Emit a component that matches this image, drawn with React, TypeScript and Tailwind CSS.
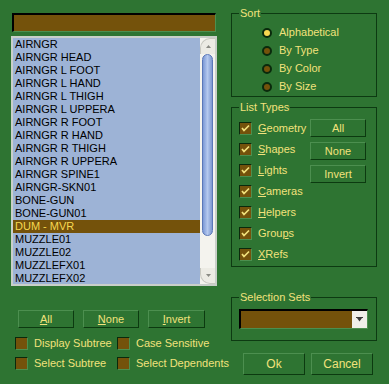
import React from 'react';

const items = [
  'AIRNGR',
  'AIRNGR HEAD',
  'AIRNGR L FOOT',
  'AIRNGR L HAND',
  'AIRNGR L THIGH',
  'AIRNGR L UPPERA',
  'AIRNGR R FOOT',
  'AIRNGR R HAND',
  'AIRNGR R THIGH',
  'AIRNGR R UPPERA',
  'AIRNGR SPINE1',
  'AIRNGR-SKN01',
  'BONE-GUN',
  'BONE-GUN01',
  'DUM - MVR',
  'MUZZLE01',
  'MUZZLE02',
  'MUZZLEFX01',
  'MUZZLEFX02',
];

const types: [string, string, string][] = [
  ['', 'G', 'eometry'],
  ['', 'S', 'hapes'],
  ['', 'L', 'ights'],
  ['', 'C', 'ameras'],
  ['', 'H', 'elpers'],
  ['Grou', 'p', 's'],
  ['', 'X', 'Refs'],
];

const Btn = ({ children, className = '' }: { children: React.ReactNode; className?: string }) => (
  <div
    className={`flex items-center justify-center border border-t-[#4c8f4f] border-l-[#4c8f4f] border-b-[#0c3a10] border-r-[#0c3a10] bg-[#2e7432] text-[#f2e27c] ${className}`}
  >
    {children}
  </div>
);

const Check = ({ checked = false }: { checked?: boolean }) => (
  <div className="flex h-[13px] w-[13px] shrink-0 items-center justify-center border border-t-[#0a2a0c] border-l-[#0a2a0c] border-b-[#4c8f4f] border-r-[#4c8f4f] bg-[#74520b]">
    {checked && (
      <svg width="9" height="9" viewBox="0 0 9 9">
        <path d="M1 4 L3 6.5 L8 1.5" fill="none" stroke="#f2e27c" strokeWidth="1.7" />
      </svg>
    )}
  </div>
);

const Radio = ({ on = false }: { on?: boolean }) => (
  <div
    className={`h-[10px] w-[10px] shrink-0 rounded-full border-2 border-[#0a2a0c] ${on ? 'bg-[#f7d850]' : 'bg-[#74520b]'}`}
  />
);

const Group = ({ label, className, children }: { label: string; className: string; children: React.ReactNode }) => (
  <div className={`relative border border-[#0d3a12] ${className}`}>
    <span className="absolute -top-[8px] left-[7px] bg-[#2e7432] px-[1px] leading-[14px]">{label}</span>
    {children}
  </div>
);

export default function App() {
  return (
    <div
      className="flex h-[384px] w-[389px] bg-[#2e7432] pl-[11px] text-[11px] leading-[13px] text-[#f2e27c]"
      style={{ fontFamily: '"Liberation Sans", Arial, sans-serif' }}
    >
      {/* left column */}
      <div className="flex w-[206px] flex-col">
        <div className="ml-[1px] mt-[13px] h-[19px] w-[204px] border-2 border-b border-r border-t-black border-l-black border-b-[#4c8f4f] border-r-[#4c8f4f] bg-[#74520b]" />
        <div className="mt-[4px] flex h-[250px] w-[206px] border-2 border-[#c9cfc9] bg-[#9db3d6]">
          <div className="flex-1 text-black">
            {items.map((it) => (
              <div
                key={it}
                className={`h-[13px] pl-[2px] ${it === 'DUM - MVR' ? 'bg-[#74520b] text-[#f7d850]' : ''}`}
              >
                {it}
              </div>
            ))}
          </div>
          <div className="flex w-[15px] flex-col bg-[#f4f3ee]">
            <div className="flex h-[16px] items-center justify-center rounded-tl-[10px] border-l border-t border-[#c8c8c0] bg-[#ecebe4]">
              <svg width="5" height="3" viewBox="0 0 5 3">
                <path d="M0 3 L2.5 0 L5 3 Z" fill="#8a8a84" />
              </svg>
            </div>
            <div className="mx-[2px] h-[182px] rounded-[6px] border border-[#5a77b8] bg-gradient-to-r from-[#7b98d6] via-[#b4c8ee] to-[#7d98d0]" />
            <div className="flex-1" />
            <div className="flex h-[16px] items-center justify-center rounded-bl-[10px] border-b border-l border-[#c8c8c0] bg-[#ecebe4]">
              <svg width="5" height="3" viewBox="0 0 5 3">
                <path d="M0 0 L2.5 3 L5 0 Z" fill="#8a8a84" />
              </svg>
            </div>
          </div>
        </div>

        <div className="mt-[24px] flex gap-[9px] pl-[7px]">
          <Btn className="h-[18px] w-[56px]">
            <span className="underline">A</span>ll
          </Btn>
          <Btn className="h-[18px] w-[56px]">
            <span className="underline">N</span>one
          </Btn>
          <Btn className="h-[18px] w-[57px]">
            <span className="underline">I</span>nvert
          </Btn>
        </div>

        <div className="mt-[9px] grid grid-cols-[102px_auto] gap-y-[7px] pl-[4px]">
          {['Display Subtree', 'Case Sensitive', 'Select Subtree', 'Select Dependents'].map((t) => (
            <div key={t} className="flex items-center gap-[6px] whitespace-nowrap">
              <Check />
              <span>{t}</span>
            </div>
          ))}
        </div>
      </div>

      {/* right column */}
      <div className="ml-[14px] flex w-[146px] flex-col">
        <Group label="Sort" className="mt-[13px] h-[84px] pl-[30px] pt-[12px]">
          <div className="flex flex-col gap-[5px]">
            {['Alphabetical', 'By Type', 'By Color', 'By Size'].map((t, i) => (
              <div key={t} className="flex items-center gap-[7px]">
                <Radio on={i === 0} />
                <span>{t}</span>
              </div>
            ))}
          </div>
        </Group>

        <Group label="List Types" className="mt-[10px] h-[160px] pl-[7px] pt-[14px]">
          <div className="flex">
            <div className="flex w-[71px] flex-col gap-[8px]">
              {types.map(([a, u, b]) => (
                <div key={u + b} className="flex items-center gap-[6px]">
                  <Check checked />
                  <span>
                    {a}
                    <span className="underline">{u}</span>
                    {b}
                  </span>
                </div>
              ))}
            </div>
            <div className="-mt-[3px] flex flex-col gap-[5px]">
              <Btn className="h-[18px] w-[56px]">All</Btn>
              <Btn className="h-[18px] w-[56px]">None</Btn>
              <Btn className="h-[18px] w-[56px]">Invert</Btn>
            </div>
          </div>
        </Group>

        <Group label="Selection Sets" className="mt-[30px] h-[44px] pl-[7px] pt-[11px]">
          <div className="flex h-[20px] w-[129px] border-2 border-b border-r border-t-black border-l-black border-b-[#4c8f4f] border-r-[#4c8f4f] bg-[#74520b]">
            <div className="flex-1" />
            <div className="flex w-[15px] items-center justify-center bg-[#f0efe9]">
              <svg width="7" height="5" viewBox="0 0 7 5">
                <path d="M0 0 H7 V1 H0 Z M1 1 L3.5 4.5 L6 1 Z" fill="#3a3a3a" />
              </svg>
            </div>
          </div>
        </Group>

        <div className="mt-[12px] flex gap-[6px] pl-[12px]">
          <Btn className="h-[22px] w-[62px] text-[12px]">Ok</Btn>
          <Btn className="h-[22px] w-[62px] text-[12px]">Cancel</Btn>
        </div>
      </div>
    </div>
  );
}
